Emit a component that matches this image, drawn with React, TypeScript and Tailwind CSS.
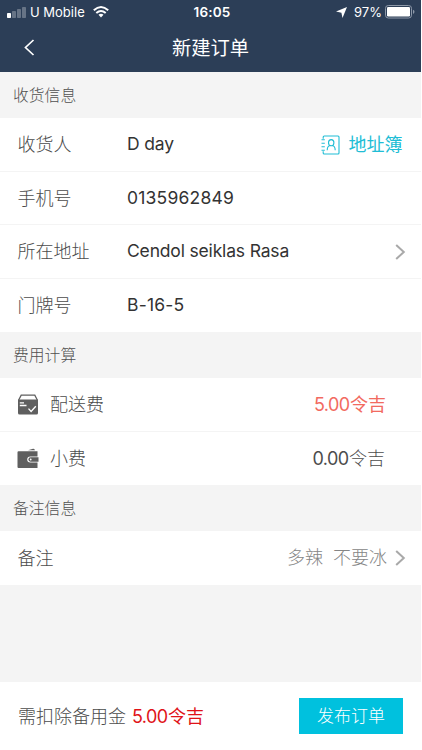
import type { ReactNode } from 'react'

interface RowProps {
  label: string
  value?: string
  numeric?: boolean
  icon?: ReactNode
  children?: ReactNode
}

function Chevron() {
  return (
    <svg width="11" height="16" viewBox="0 0 11 16" fill="none" stroke="#a9a9a9" strokeWidth="2">
      <path d="M1.2 0.9L8.8 8L1.2 15.1" />
    </svg>
  )
}

function SectionTitle({ children }: { children: ReactNode }) {
  return (
    <h2 className="flex h-[46px] items-center pl-[13px] pt-[2px] text-[15.8px] font-light text-[#505050]">{children}</h2>
  )
}

function Amount({ value }: { value: string }) {
  return (
    <>
      <span className="text-[18px] font-normal tracking-[-0.6px]">{value}</span>
      <span className="ml-[0.5px]">令吉</span>
    </>
  )
}

function Row({ label, value, numeric, icon, children }: RowProps) {
  return (
    <div className="flex h-[53.5px] items-center border-b border-[#f4f4f4] pl-[17.5px] text-[#4c4c4c] last:border-b-0">
      {icon && <span className="-ml-[0.5px] w-[33px]">{icon}</span>}
      <span className="w-[109.5px] whitespace-nowrap pt-[2px]">{label}</span>
      <span
        className={`flex-1 whitespace-nowrap pb-px text-[17.5px] font-normal text-[#333] ${numeric ? 'tracking-[0.2px]' : 'tracking-[-0.17px]'}`}
      >
        {value}
      </span>
      {children}
    </div>
  )
}

function BoxIcon() {
  return (
    <svg width="22" height="21" viewBox="0 0 22 21" fill="none">
      <path d="M1.7 6L4.2 1.1H17.8L20.3 6" stroke="#5f5f5f" strokeWidth="1.3" />
      <path d="M1 5.5H21V19Q21 20.5 19.5 20.5H2.5Q1 20.5 1 19Z" fill="#5f5f5f" />
      <path d="M2.8 8.8H7M2.8 11.5H9.5M11.5 14.6L14.1 17.5L18.8 12.2" stroke="#fff" strokeWidth="1.3" />
    </svg>
  )
}

function WalletIcon() {
  return (
    <svg width="22" height="21" viewBox="0 0 22 21" fill="none">
      <path d="M11 2.3L16 0.7Q17.6 0.3 18 2.3Z" fill="#5f5f5f" />
      <path d="M1.5 3.3H20.5V8.4H13.4Q10.2 8.5 10.2 11.5Q10.2 14.5 13.4 14.6H20.5V20H1.5Q0.5 20 0.5 19V4.3Q0.5 3.3 1.5 3.3Z" fill="#5f5f5f" />
      <path d="M13.6 9.3H21.5V13.7H13.6Q11.4 13.6 11.4 11.5Q11.4 9.4 13.6 9.3Z" fill="#5f5f5f" />
      <circle cx="13.7" cy="11.5" r="0.9" fill="#fff" />
    </svg>
  )
}

function ContactIcon() {
  return (
    <svg width="19" height="20" viewBox="0 0 19 20" fill="none" stroke="#20bdd5" strokeWidth="1.1">
      <path d="M2.2 3.7V2Q2.2 1 3.2 1H17Q18 1 18 2V18Q18 19 17 19H3.2Q2.2 19 2.2 18V16.3" />
      <path d="M0.5 4.7H3.8M0.5 8.2H3.8M0.5 11.7H3.8M0.5 15.2H3.8" />
      <ellipse cx="10.2" cy="7.7" rx="2.7" ry="3.1" />
      <path d="M6.2 15.2Q6.3 11.4 8.8 10.6M11.6 10.6Q14.1 11.4 14.2 15.2" />
    </svg>
  )
}

function StatusBar() {
  return (
    <div className="grid h-6 grid-cols-[1fr_auto_1fr] items-center pl-[7px] pr-[6px] text-[13px] font-normal">
      <div className="flex items-center">
        <svg width="19" height="11" viewBox="0 0 19 11" fill="#fff">
          <rect x="0" y="6" width="4" height="5" rx="0.8" />
          <g opacity="0.28">
            <rect x="5" y="4" width="4" height="7" rx="0.8" />
            <rect x="10" y="2" width="4" height="9" rx="0.8" />
            <rect x="15" y="0" width="4" height="11" rx="0.8" />
          </g>
        </svg>
        <span className="ml-[4px] whitespace-nowrap">U Mobile</span>
        <svg className="ml-[8px]" width="16" height="12" viewBox="0 0 16 12" fill="none" stroke="#fff" strokeWidth="2">
          <path d="M0.8 4.3Q8-2.2 15.2 4.3M3.3 7Q8 2.9 12.7 7" />
          <path d="M5.5 8.8Q8 6.8 10.5 8.8L8 11.4Z" fill="#fff" stroke="none" />
        </svg>
      </div>
      <span className="pl-[2px] pt-px text-[13.5px] font-semibold tracking-[0.2px]">16:05</span>
      <div className="flex items-center justify-end">
        <svg width="11" height="11" viewBox="0 0 11 11" fill="#fff">
          <path d="M11 0L6.5 11L5.4 5.7L0 4.6Z" />
        </svg>
        <span className="ml-[7px]">97%</span>
        <svg className="ml-[3px]" width="30" height="14" viewBox="0 0 30 14" fill="none">
          <rect x="0.5" y="0.5" width="26" height="12.5" rx="2.8" stroke="#8d98a8" />
          <rect x="2" y="2" width="23" height="9.5" rx="1.2" fill="#fff" />
          <path d="M28 4.7Q29.5 5.2 29.5 6.8Q29.5 8.4 28 8.9Z" fill="#8d98a8" />
        </svg>
      </div>
    </div>
  )
}

export default function App() {
  return (
    <div className="flex h-[750px] w-[421px] flex-col bg-[#f4f4f4] font-['Inter','Noto_Sans_CJK_SC',sans-serif] text-[18px] leading-none font-light">
      <header className="h-[72px] shrink-0 bg-[#2c3e57] text-white">
        <StatusBar />
        <div className="grid h-[47px] grid-cols-[1fr_auto_1fr] items-center">
          <svg className="ml-[24px]" width="11" height="17" viewBox="0 0 11 17" fill="none" stroke="#fff" strokeWidth="1.7">
            <path d="M9.5 1L1.5 8.5L9.5 16" />
          </svg>
          <h1 className="pt-[2px] text-[19.3px] font-normal">新建订单</h1>
        </div>
      </header>

      <SectionTitle>收货信息</SectionTitle>
      <div className="bg-white">
        <Row label="收货人" value="D day">
          <button className="flex items-center gap-[9px] pr-[18.5px] pt-px font-normal text-[#20bdd5]">
            <ContactIcon />
            <span className="pt-px">地址簿</span>
          </button>
        </Row>
        <Row label="手机号" value="0135962849" numeric />
        <Row label="所在地址" value="Cendol seiklas Rasa">
          <span className="pr-[15px] pt-px"><Chevron /></span>
        </Row>
        <Row label="门牌号" value="B-16-5" numeric />
      </div>

      <SectionTitle>费用计算</SectionTitle>
      <div className="bg-white">
        <Row label="配送费" icon={<BoxIcon />}>
          <span className="pr-[35px] pt-[2px] font-normal text-[#f26a60]">
            <Amount value="5.00" />
          </span>
        </Row>
        <Row label="小费" icon={<WalletIcon />}>
          <span className="pr-[36px] pt-[2px]">
            <Amount value="0.00" />
          </span>
        </Row>
      </div>

      <SectionTitle>备注信息</SectionTitle>
      <div className="bg-white">
        <Row label="备注">
          <span className="flex items-center pr-[15px] text-[#858585]">
            <span className="mr-[10px] pt-px">多辣</span>
            <span className="mr-[8px] pt-px">不要冰</span>
            <Chevron />
          </span>
        </Row>
      </div>

      <footer className="mt-auto flex h-[68px] items-center justify-between bg-white pl-[18px] pr-[18px] text-[#4c4c4c]">
        <p className="pt-[2px]">
          需扣除备用金
          <span className="ml-[6px] font-normal text-[#e01318]">
            <Amount value="5.00" />
          </span>
        </p>
        <button className="h-[36px] w-[104px] bg-[#00c1de] pt-px text-[17px] text-white">发布订单</button>
      </footer>
    </div>
  )
}
